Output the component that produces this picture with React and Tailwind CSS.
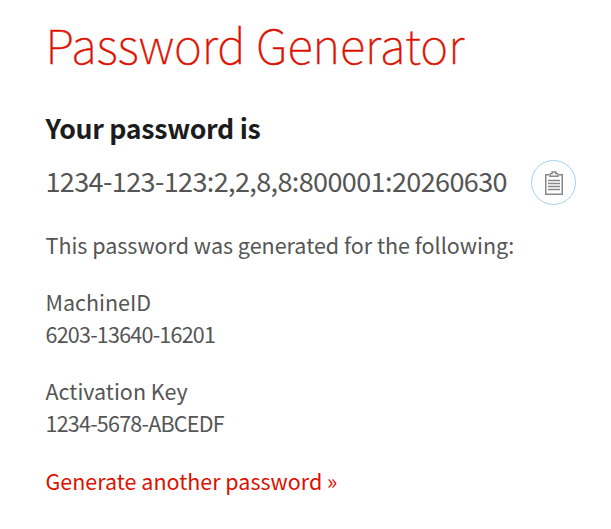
function ClipboardIcon() {
  return (
    <svg width="18" height="24" viewBox="0 0 18 24" fill="none" stroke="#888888" strokeWidth="1.5">
      <path d="M4 3.75H0.75V23.25H17.25V3.75H14" />
      <path d="M5 5.25V3.6Q5 2.6 6.2 2.6H7.2V1H10.8V2.6H11.8Q13 2.6 13 3.6V5.25Z" />
      <path d="M3 9.5H15M3 12.5H15M3 15.5H15M3 18.5H15" strokeWidth="1.3" />
    </svg>
  );
}

function Detail({ label, value }) {
  return (
    <div className="mb-[25px]">
      <p>{label}</p>
      <p className="tracking-[-0.77px]">{value}</p>
    </div>
  );
}

const details = [
  { label: 'MachineID', value: '6203-13640-16201' },
  { label: 'Activation Key', value: '1234-5678-ABCEDF' },
];

export default function App() {
  return (
    <main className="h-[529px] w-[611px] bg-white pl-[45.5px] pt-[12px] font-['Noto_Sans_CJK_SC',sans-serif] text-[21.5px] leading-8 text-[#555555] whitespace-nowrap">
      <h1 className="text-[47.5px] leading-[64px] font-thin text-[#dd1100] [-webkit-text-stroke:0.45px_#dd1100]">Password Generator</h1>

      <h2 className="mt-[32px] text-[26.7px] leading-10 font-semibold tracking-[-0.3px] text-[#1c1c1c]">Your password is</h2>

      <div className="mt-[12px] flex items-center">
        <p className="-mt-[4px] w-[485.5px] text-[27px] leading-10 tracking-[-0.61px]">1234-123-123:2,2,8,8:800001:20260630</p>
        <button className="flex size-[45px] items-center justify-center rounded-full border border-[#a6d0f5]">
          <ClipboardIcon />
        </button>
      </div>

      <p className="mt-[24px] mb-[25px]">This password was generated for the following:</p>

      {details.map((item) => (
        <Detail key={item.label} label={item.label} value={item.value} />
      ))}

      <a href="#" className="mt-[26px] block text-[#dd1100]">Generate another password »</a>
    </main>
  );
}
